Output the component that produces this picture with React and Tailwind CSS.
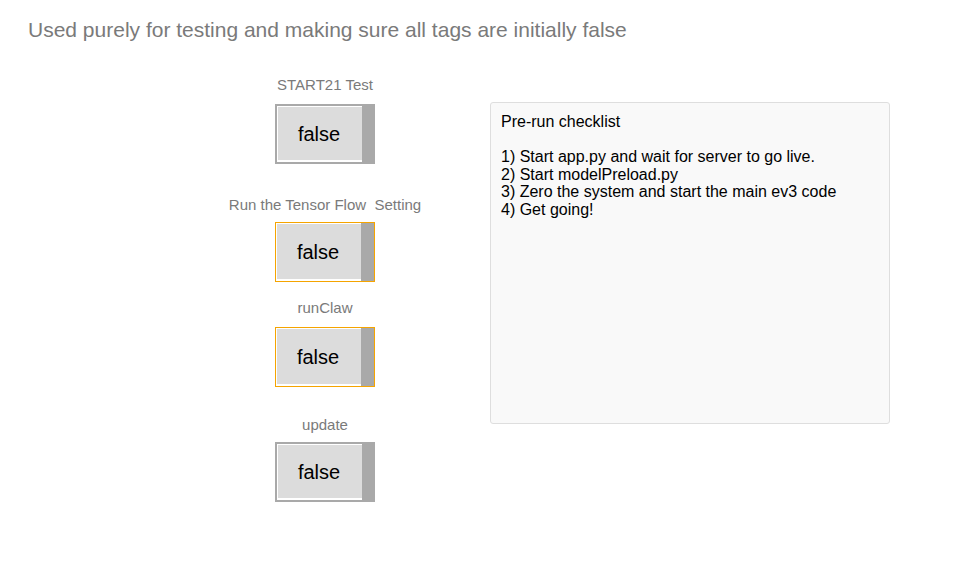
import React from 'react'

const tags = [
  { label: 'START21 Test', active: false, mt: 'mt-[34px]', gap: 'mt-[10px]' },
  { label: 'Run the Tensor Flow  Setting', active: true, mt: 'mt-[32px]', gap: 'mt-[8px]' },
  { label: 'runClaw', active: true, mt: 'mt-[17px]', gap: 'mt-[10px]' },
  { label: 'update', active: false, mt: 'mt-[29px]', gap: 'mt-[8px]' },
]

function TagToggle({ label, active, mt, gap }) {
  return (
    <div className={`flex flex-col items-center ${mt}`}>
      <div className="text-[15px] leading-[18px] text-[#7a7a7a] whitespace-pre">{label}</div>
      <div
        className={`${gap} flex w-[100px] h-[60px] bg-white ${
          active ? 'border-[1.5px] border-[#f5a400]' : 'border-2 border-[#a9a9a9] border-r-0'
        }`}
      >
        <div className="flex-1 ml-px mt-px mb-[2px] bg-[#dcdcdc] flex items-center justify-center pr-[2px] text-[20px] text-black">
          false
        </div>
        <div className="w-[13px] bg-[#a9a9a9]" />
      </div>
    </div>
  )
}

export default function App() {
  return (
    <div className="w-[971px] h-[575px] bg-white font-['Liberation_Sans',Arial,sans-serif]">
      <div className="pl-[28px] pt-[18px] text-[21px] leading-[24px] text-[#7a7a7a]">
        Used purely for testing and making sure all tags are initially false
      </div>

      <div className="flex">
        <div className="ml-[200px] w-[250px] flex flex-col">
          {tags.map(t => (
            <TagToggle key={t.label} {...t} />
          ))}
        </div>

        <div className="ml-[40px] mt-[60px] w-[400px] h-[322px] border border-[#dedede] rounded-[3px] bg-[#f9f9f9] px-[10px] pt-[10px] text-[16px] leading-[17.5px] text-black">
          <div>Pre-run checklist</div>
          <div className="mt-[17.5px]">1) Start app.py and wait for server to go live.</div>
          <div>2) Start modelPreload.py</div>
          <div>3) Zero the system and start the main ev3 code</div>
          <div>4) Get going!</div>
        </div>
      </div>
    </div>
  )
}
